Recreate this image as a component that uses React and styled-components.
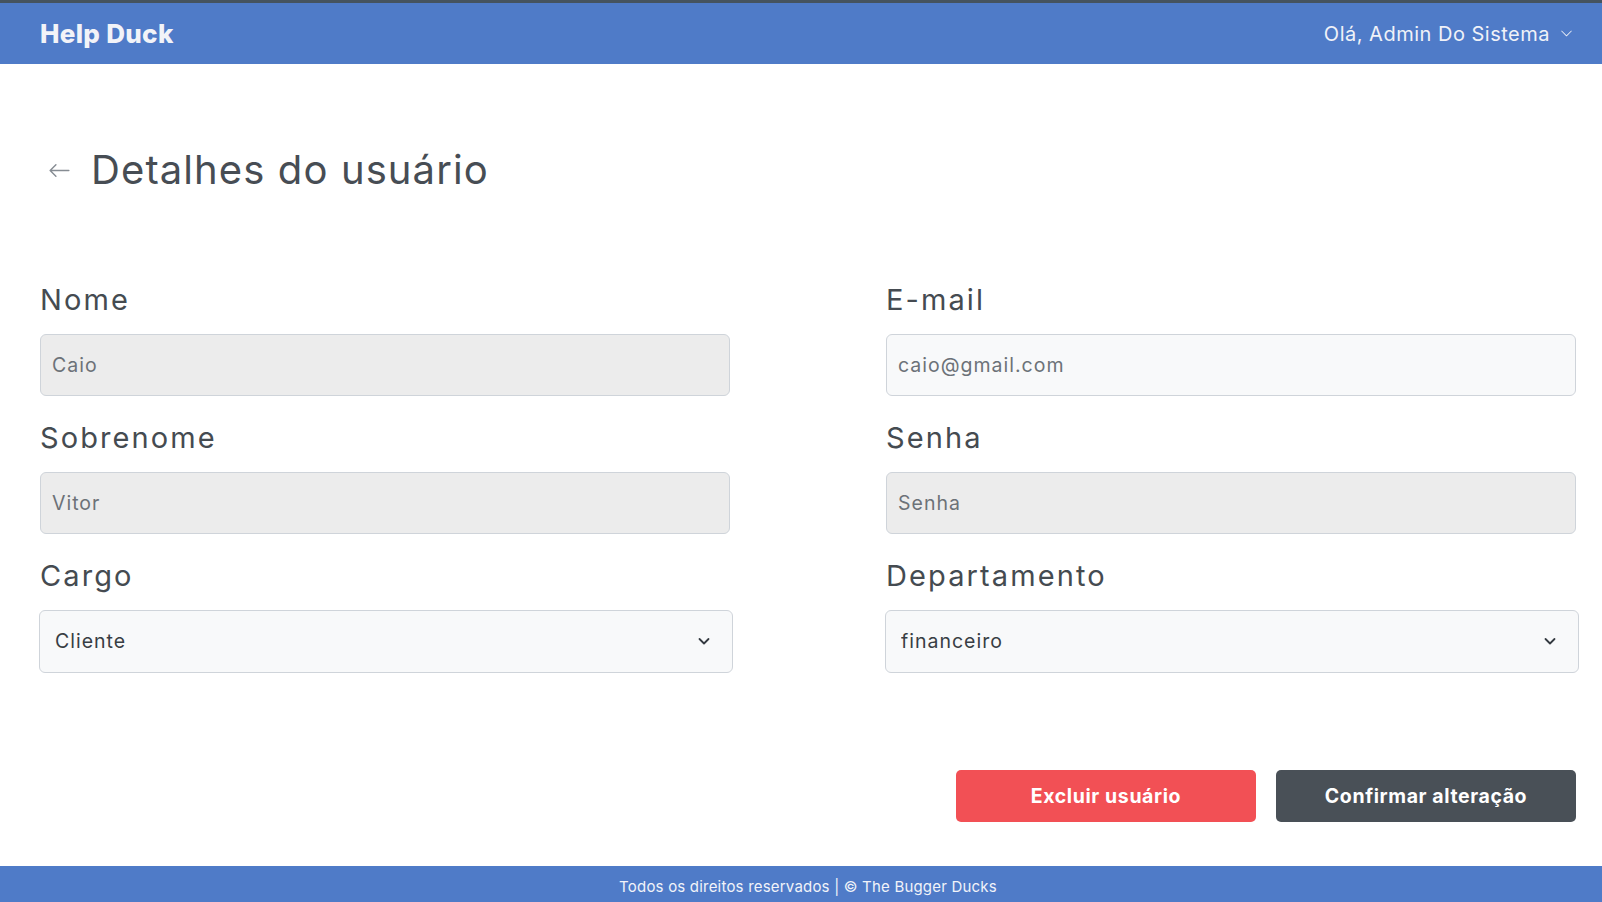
import React from "react";
import styled, { createGlobalStyle } from "styled-components";
import { BsArrowLeft, BsChevronDown } from "react-icons/bs";

const GlobalStyle = createGlobalStyle`
  * { box-sizing: border-box; }
  body {
    margin: 0;
    background: #fff;
    font-family: Inter, "Noto Sans", sans-serif;
  }
`;

const fields = [
  { label: "Nome", value: "Caio", disabled: true },
  { label: "E-mail", value: "caio@gmail.com" },
  { label: "Sobrenome", value: "Vitor", disabled: true },
  { label: "Senha", value: "Senha", disabled: true },
];

const selects = [
  { label: "Cargo", value: "Cliente", options: ["Cliente", "Técnico", "Administrador"] },
  { label: "Departamento", value: "financeiro", options: ["financeiro", "suporte", "comercial"] },
];

const App = () => {
  return (
    <Page>
      <GlobalStyle />
      <Header>
        <Brand>Help Duck</Brand>
        <UserMenu>
          Olá, Admin Do Sistema
          <BsChevronDown size={13} />
        </UserMenu>
      </Header>

      <Main>
        <TitleRow>
          <BackButton aria-label="Voltar">
            <BsArrowLeft size={23} />
          </BackButton>
          <Title>Detalhes do usuário</Title>
        </TitleRow>

        <Form>
          {fields.map((f) => (
            <Field key={f.label}>
              <Label>{f.label}</Label>
              <Input defaultValue={f.value} disabled={f.disabled} $disabled={f.disabled} />
            </Field>
          ))}
          {selects.map((s) => (
            <Field key={s.label}>
              <Label>{s.label}</Label>
              <SelectWrap>
                <Select defaultValue={s.value}>
                  {s.options.map((o) => (
                    <option key={o}>{o}</option>
                  ))}
                </Select>
                <Chevron viewBox="0 0 16 16">
                  <path d="M3.5 6l4.5 4.5L12.5 6" />
                </Chevron>
              </SelectWrap>
            </Field>
          ))}
        </Form>

        <Actions>
          <Button $variant="danger">Excluir usuário</Button>
          <Button>Confirmar alteração</Button>
        </Actions>
      </Main>

      <Footer>Todos os direitos reservados | © The Bugger Ducks</Footer>
    </Page>
  );
};

export default App;

const Page = styled.div`
  min-height: 100vh;
  display: flex;
  flex-direction: column;
`;

const Header = styled.header`
  height: 64px;
  border-top: 3px solid #45535f;
  background: #4f7bc8;
  display: flex;
  align-items: center;
  justify-content: space-between;
  padding: 0 29px 0 40px;
`;

const Brand = styled.div`
  font-size: 26px;
  font-weight: 800;
  letter-spacing: 0.3px;
  color: #f2f3f8;
`;

const UserMenu = styled.div`
  display: flex;
  align-items: center;
  gap: 10px;
  font-size: 20px;
  letter-spacing: 0.5px;
  color: #f0f2f8;
  cursor: pointer;
`;

const Main = styled.main`
  flex: 1;
  padding: 82px 26px 44px 40px;
  display: flex;
  flex-direction: column;
`;

const TitleRow = styled.div`
  display: flex;
  align-items: center;
  gap: 20px;
  height: 48px;
  padding-left: 8px;
`;

const BackButton = styled.button`
  border: 0;
  background: none;
  padding: 0;
  display: flex;
  color: #868c93;
  cursor: pointer;
`;

const Title = styled.h1`
  margin: 0;
  font-size: 40px;
  font-weight: 400;
  line-height: 48px;
  letter-spacing: 1.1px;
  color: #474d54;
`;

const Form = styled.div`
  margin-top: 88px;
  display: grid;
  grid-template-columns: 690px 690px;
  column-gap: 156px;
  row-gap: 24.6px;
`;

const Field = styled.div`
  display: flex;
  flex-direction: column;
  gap: 15.5px;
`;

const Label = styled.label`
  font-size: 29px;
  line-height: 36px;
  letter-spacing: 2.1px;
  color: #454b51;
`;

const Input = styled.input`
  height: 62px;
  width: 100%;
  border: 1px solid #cfd4da;
  border-radius: 6px;
  background: ${(p) => (p.$disabled ? "#ececec" : "#f8f9fa")};
  padding: 0 11px;
  font-family: inherit;
  font-size: 19.5px;
  letter-spacing: 1px;
  color: #6c7278;
  outline: none;
`;

const SelectWrap = styled.div`
  position: relative;
  width: calc(100% + 4px);
  margin-left: -1px;
`;

const Select = styled.select`
  appearance: none;
  width: 100%;
  height: 63px;
  border: 1px solid #cfd4da;
  border-radius: 6px;
  background: #f8f9fa;
  padding: 0 15px;
  font-family: inherit;
  font-size: 19.5px;
  letter-spacing: 1px;
  color: #383e44;
  outline: none;
`;

const Chevron = styled.svg`
  position: absolute;
  right: 21px;
  top: 50%;
  width: 16px;
  height: 16px;
  margin-top: -8px;
  fill: none;
  stroke: #343a40;
  stroke-width: 1.8;
  stroke-linecap: round;
  stroke-linejoin: round;
  pointer-events: none;
`;

const Actions = styled.div`
  margin-top: 97px;
  display: flex;
  justify-content: flex-end;
  gap: 20px;
`;

const Button = styled.button`
  width: 300px;
  height: 52px;
  border: 0;
  border-radius: 5px;
  background: ${(p) => (p.$variant === "danger" ? "#f25055" : "#495057")};
  color: #fff;
  font-family: inherit;
  font-size: 19.5px;
  font-weight: 700;
  letter-spacing: 0.6px;
  cursor: pointer;
`;

const Footer = styled.footer`
  height: 36px;
  background: #4f7bc8;
  color: #f1f3f9;
  font-size: 15px;
  line-height: 36px;
  padding: 3px 0 0 14px;
  letter-spacing: 0.2px;
  text-align: center;
`;
